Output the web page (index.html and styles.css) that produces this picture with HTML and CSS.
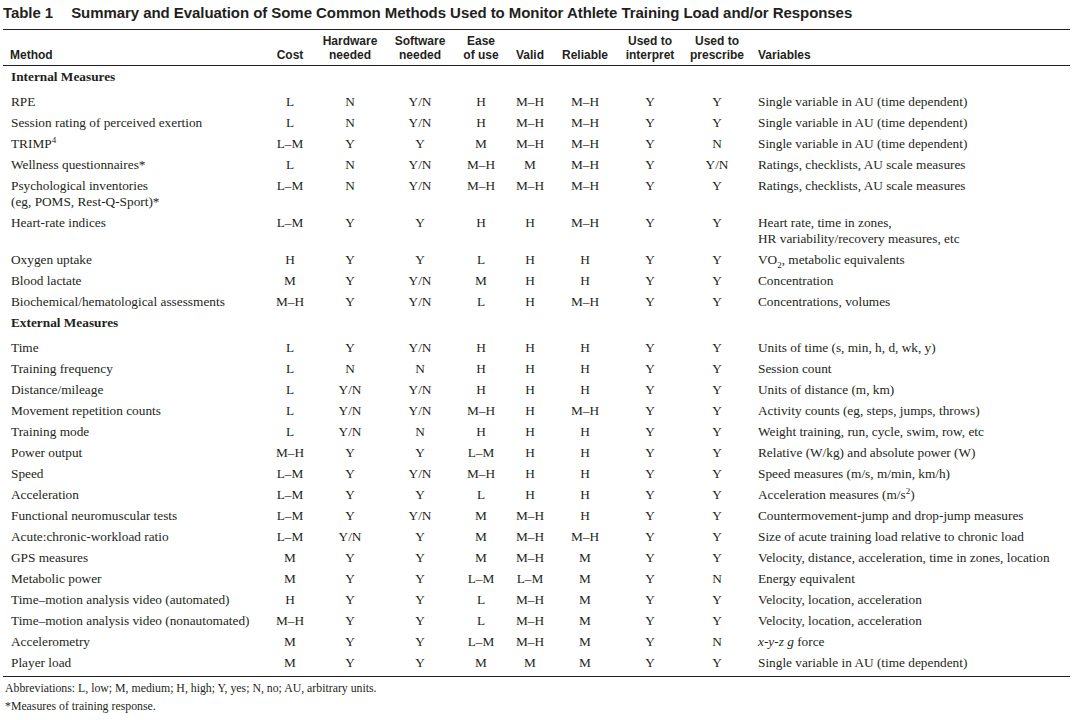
FILE: index.html
```html
<!DOCTYPE html>
<html lang="en">
<head>
<meta charset="utf-8">
<title>Table 1</title>
<link rel="stylesheet" href="styles.css">
</head>
<body>
<div class="page">
  <div class="title"><span class="title-label">Table 1</span>Summary and Evaluation of Some Common Methods Used to Monitor Athlete Training Load and/or Responses</div>
  <table class="data">
    <colgroup>
      <col class="c-method">
      <col class="c-cost">
      <col class="c-hw">
      <col class="c-sw">
      <col class="c-ease">
      <col class="c-valid">
      <col class="c-rel">
      <col class="c-int">
      <col class="c-pre">
      <col class="c-vars">
    </colgroup>
    <thead>
      <tr>
        <th class="method">Method</th>
        <th>Cost</th>
        <th>Hardware<br>needed</th>
        <th>Software<br>needed</th>
        <th>Ease<br>of use</th>
        <th>Valid</th>
        <th>Reliable</th>
        <th>Used to<br>interpret</th>
        <th>Used to<br>prescribe</th>
        <th class="vars">Variables</th>
      </tr>
    </thead>
    <tbody>
      <tr class="section"><td colspan="10">Internal Measures</td></tr>
      <tr><td class="method">RPE</td><td>L</td><td>N</td><td>Y/N</td><td>H</td><td>M–H</td><td>M–H</td><td>Y</td><td>Y</td><td class="vars">Single variable in AU (time dependent)</td></tr>
      <tr><td class="method">Session rating of perceived exertion</td><td>L</td><td>N</td><td>Y/N</td><td>H</td><td>M–H</td><td>M–H</td><td>Y</td><td>Y</td><td class="vars">Single variable in AU (time dependent)</td></tr>
      <tr><td class="method">TRIMP<sup>4</sup></td><td>L–M</td><td>Y</td><td>Y</td><td>M</td><td>M–H</td><td>M–H</td><td>Y</td><td>N</td><td class="vars">Single variable in AU (time dependent)</td></tr>
      <tr><td class="method">Wellness questionnaires*</td><td>L</td><td>N</td><td>Y/N</td><td>M–H</td><td>M</td><td>M–H</td><td>Y</td><td>Y/N</td><td class="vars">Ratings, checklists, AU scale measures</td></tr>
      <tr><td class="method">Psychological inventories<br>(eg, POMS, Rest-Q-Sport)*</td><td>L–M</td><td>N</td><td>Y/N</td><td>M–H</td><td>M–H</td><td>M–H</td><td>Y</td><td>Y</td><td class="vars">Ratings, checklists, AU scale measures</td></tr>
      <tr><td class="method">Heart-rate indices</td><td>L–M</td><td>Y</td><td>Y</td><td>H</td><td>H</td><td>M–H</td><td>Y</td><td>Y</td><td class="vars">Heart rate, time in zones,<br>HR variability/recovery measures, etc</td></tr>
      <tr><td class="method">Oxygen uptake</td><td>H</td><td>Y</td><td>Y</td><td>L</td><td>H</td><td>H</td><td>Y</td><td>Y</td><td class="vars">VO<sub>2</sub>, metabolic equivalents</td></tr>
      <tr><td class="method">Blood lactate</td><td>M</td><td>Y</td><td>Y/N</td><td>M</td><td>H</td><td>H</td><td>Y</td><td>Y</td><td class="vars">Concentration</td></tr>
      <tr><td class="method">Biochemical/hematological assessments</td><td>M–H</td><td>Y</td><td>Y/N</td><td>L</td><td>H</td><td>M–H</td><td>Y</td><td>Y</td><td class="vars">Concentrations, volumes</td></tr>
      <tr class="section"><td colspan="10">External Measures</td></tr>
      <tr><td class="method">Time</td><td>L</td><td>Y</td><td>Y/N</td><td>H</td><td>H</td><td>H</td><td>Y</td><td>Y</td><td class="vars">Units of time (s, min, h, d, wk, y)</td></tr>
      <tr><td class="method">Training frequency</td><td>L</td><td>N</td><td>N</td><td>H</td><td>H</td><td>H</td><td>Y</td><td>Y</td><td class="vars">Session count</td></tr>
      <tr><td class="method">Distance/mileage</td><td>L</td><td>Y/N</td><td>Y/N</td><td>H</td><td>H</td><td>H</td><td>Y</td><td>Y</td><td class="vars">Units of distance (m, km)</td></tr>
      <tr><td class="method">Movement repetition counts</td><td>L</td><td>Y/N</td><td>Y/N</td><td>M–H</td><td>H</td><td>M–H</td><td>Y</td><td>Y</td><td class="vars">Activity counts (eg, steps, jumps, throws)</td></tr>
      <tr><td class="method">Training mode</td><td>L</td><td>Y/N</td><td>N</td><td>H</td><td>H</td><td>H</td><td>Y</td><td>Y</td><td class="vars">Weight training, run, cycle, swim, row, etc</td></tr>
      <tr><td class="method">Power output</td><td>M–H</td><td>Y</td><td>Y</td><td>L–M</td><td>H</td><td>H</td><td>Y</td><td>Y</td><td class="vars">Relative (W/kg) and absolute power (W)</td></tr>
      <tr><td class="method">Speed</td><td>L–M</td><td>Y</td><td>Y/N</td><td>M–H</td><td>H</td><td>H</td><td>Y</td><td>Y</td><td class="vars">Speed measures (m/s, m/min, km/h)</td></tr>
      <tr><td class="method">Acceleration</td><td>L–M</td><td>Y</td><td>Y</td><td>L</td><td>H</td><td>H</td><td>Y</td><td>Y</td><td class="vars">Acceleration measures (m/s<sup>2</sup>)</td></tr>
      <tr><td class="method">Functional neuromuscular tests</td><td>L–M</td><td>Y</td><td>Y/N</td><td>M</td><td>M–H</td><td>H</td><td>Y</td><td>Y</td><td class="vars">Countermovement-jump and drop-jump measures</td></tr>
      <tr><td class="method">Acute:chronic-workload ratio</td><td>L–M</td><td>Y/N</td><td>Y</td><td>M</td><td>M–H</td><td>M–H</td><td>Y</td><td>Y</td><td class="vars">Size of acute training load relative to chronic load</td></tr>
      <tr><td class="method">GPS measures</td><td>M</td><td>Y</td><td>Y</td><td>M</td><td>M–H</td><td>M</td><td>Y</td><td>Y</td><td class="vars">Velocity, distance, acceleration, time in zones, location</td></tr>
      <tr><td class="method">Metabolic power</td><td>M</td><td>Y</td><td>Y</td><td>L–M</td><td>L–M</td><td>M</td><td>Y</td><td>N</td><td class="vars">Energy equivalent</td></tr>
      <tr><td class="method">Time–motion analysis video (automated)</td><td>H</td><td>Y</td><td>Y</td><td>L</td><td>M–H</td><td>M</td><td>Y</td><td>Y</td><td class="vars">Velocity, location, acceleration</td></tr>
      <tr><td class="method">Time–motion analysis video (nonautomated)</td><td>M–H</td><td>Y</td><td>Y</td><td>L</td><td>M–H</td><td>M</td><td>Y</td><td>Y</td><td class="vars">Velocity, location, acceleration</td></tr>
      <tr><td class="method">Accelerometry</td><td>M</td><td>Y</td><td>Y</td><td>L–M</td><td>M–H</td><td>M</td><td>Y</td><td>N</td><td class="vars"><i>x</i>-<i>y</i>-<i>z</i> <i>g</i> force</td></tr>
      <tr class="last"><td class="method">Player load</td><td>M</td><td>Y</td><td>Y</td><td>M</td><td>M</td><td>M</td><td>Y</td><td>Y</td><td class="vars">Single variable in AU (time dependent)</td></tr>
    </tbody>
  </table>
  <div class="notes">
    <p>Abbreviations: L, low; M, medium; H, high; Y, yes; N, no; AU, arbitrary units.</p>
    <p>*Measures of training response.</p>
  </div>
</div>
</body>
</html>
```

FILE: styles.css
```css
html, body {
  margin: 0;
  padding: 0;
  background: #ffffff;
}

body {
  color: #231f20;
}

.page {
  width: 1067px;
  padding-left: 3px;
}

.title {
  font-family: "Liberation Sans", Arial, sans-serif;
  font-weight: bold;
  font-size: 15px;
  line-height: 18px;
  letter-spacing: -0.06px;
  padding-top: 4px;
  margin-bottom: 7px;
  white-space: nowrap;
}

.title-label {
  margin-right: 18px;
}

.data {
  width: 1067px;
  table-layout: fixed;
  border-collapse: collapse;
  font-family: "Liberation Serif", "Times New Roman", serif;
  font-size: 13.3px;
  line-height: 16px;
  border-top: 1px solid #231f20;
  border-bottom: 1px solid #231f20;
}

.c-method { width: 262px; }
.c-cost { width: 50px; }
.c-hw { width: 70px; }
.c-sw { width: 70px; }
.c-ease { width: 52px; }
.c-valid { width: 46px; }
.c-rel { width: 64px; }
.c-int { width: 66px; }
.c-pre { width: 68px; }
.c-vars { width: 319px; }

.data th {
  font-family: "Liberation Sans", Arial, sans-serif;
  font-weight: bold;
  font-size: 12px;
  line-height: 14px;
  vertical-align: bottom;
  text-align: center;
  padding: 4px 0 3px;
  height: 28px;
  border-bottom: 1px solid #231f20;
  white-space: nowrap;
}

.data td {
  text-align: center;
  vertical-align: top;
  padding: 3px 0 2px;
  white-space: nowrap;
}

.data .method {
  text-align: left;
  padding-left: 8px;
}

.data .vars {
  text-align: left;
  padding-left: 7px;
}

.data th.method {
  padding-left: 7px;
}

.data .section td {
  text-align: left;
  font-weight: bold;
  padding: 3px 0 6px 8px;
}

.data .last td {
  padding-bottom: 5px;
}

.data sup,
.data sub {
  font-size: 9px;
  line-height: 0;
}

.notes {
  font-family: "Liberation Serif", "Times New Roman", serif;
  font-size: 11.8px;
  line-height: 18px;
  padding-top: 2px;
  padding-left: 2px;
}

.notes p {
  margin: 0;
}
```
